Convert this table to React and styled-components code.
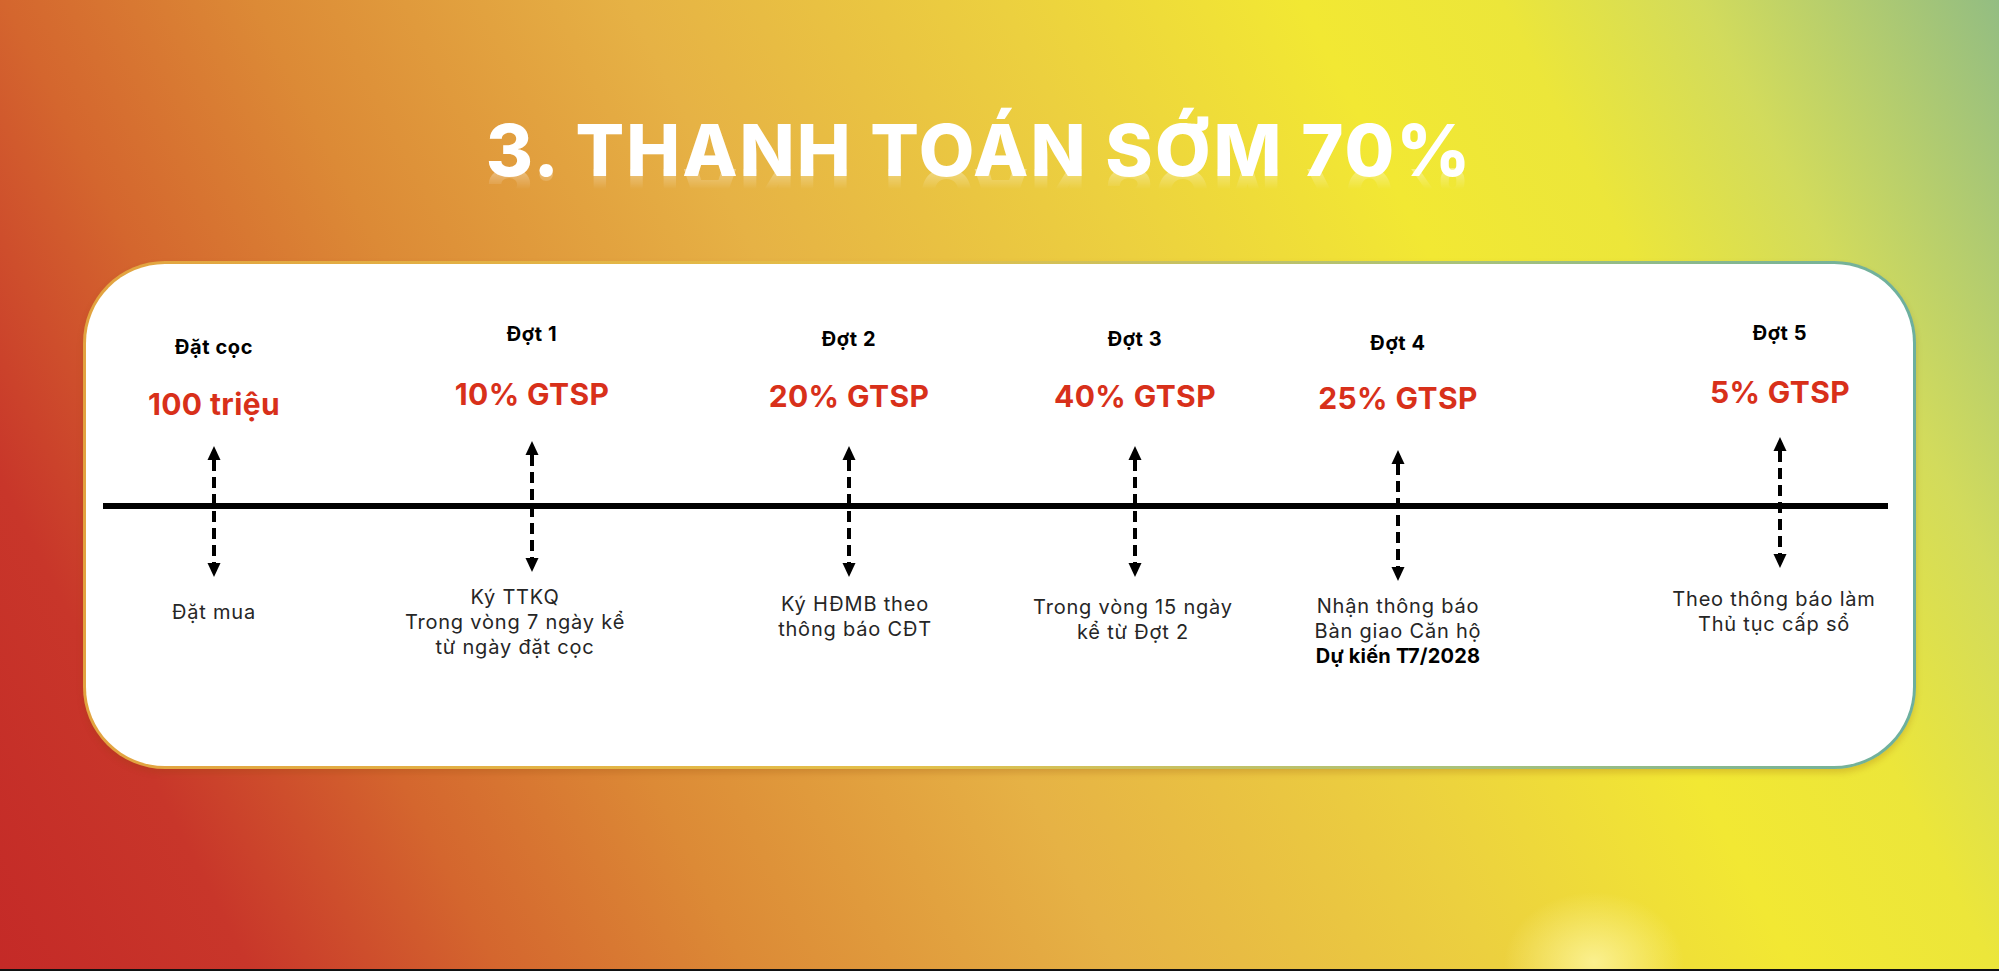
import React from "react";
import styled, { createGlobalStyle } from "styled-components";

const GlobalStyle = createGlobalStyle`
  html, body {
    margin: 0;
    padding: 0;
  }
  body {
    font-family: Inter, "Noto Sans", sans-serif;
  }
`;

const Page = styled.div`
  width: 1999px;
  height: 971px;
  box-sizing: border-box;
  border-bottom: 2px solid #111;
  overflow: hidden;
  display: flex;
  flex-direction: column;
  align-items: center;
  background:
    radial-gradient(ellipse 90px 70px at 1594px 962px, rgba(255, 248, 170, 0.75) 0, rgba(255, 248, 170, 0) 100%),
    linear-gradient(
      63deg,
      #c42a27 0%,
      #c8362a 10%,
      #d4662e 20%,
      #dc8a36 30%,
      #e6b245 45%,
      #ecd03f 60%,
      #f2e833 72%,
      #ece63a 80%,
      #d2db5c 88%,
      #93bd82 100%
    );
`;

const Title = styled.h1`
  margin: 114px 41px 0 0;
  font-family: Inter, "Open Sans", sans-serif;
  font-weight: 800;
  font-size: 72px;
  line-height: 1;
  color: #fff;
  letter-spacing: 2px;
  -webkit-box-reflect: below -27px
    linear-gradient(transparent 58%, rgba(255, 255, 255, 0.55));
`;

const Card = styled.section`
  margin-top: 75px;
  width: 1833px;
  height: 508px;
  box-sizing: border-box;
  border: 3px solid transparent;
  border-radius: 82px;
  background:
    linear-gradient(#fff, #fff) padding-box,
    linear-gradient(90deg, #e2a340 0%, #e3c04a 45%, #a9c27a 75%, #6caf9f 100%) border-box;
  box-shadow: 0 4px 6px rgba(140, 70, 10, 0.22);
`;

const Timeline = styled.div`
  display: flex;
  height: 100%;
  background: linear-gradient(#000, #000) 17px 239px / 1785px 6px no-repeat;
`;

const Stop = styled.div`
  width: 250px;
  flex: none;
  margin-left: ${(p) => p.$gap}px;
  display: flex;
  flex-direction: column;
  align-items: center;
  text-align: center;
`;

const Label = styled.div`
  margin-top: ${(p) => p.$mt}px;
  font-weight: 700;
  font-size: 20px;
  line-height: 24px;
  letter-spacing: 0.6px;
  color: #000;
`;

const Amount = styled.div`
  margin-top: ${(p) => p.$mt}px;
  font-weight: 700;
  font-size: 30px;
  line-height: 36px;
  color: #d8301a;
  letter-spacing: 0.4px;
`;

const ArrowBox = styled.div`
  margin-top: ${(p) => p.$mt}px;
  width: 16px;
  height: 131px;
  display: flex;
`;

const Desc = styled.div`
  margin: ${(p) => p.$mt}px ${(p) => -p.$dx}px 0 ${(p) => p.$dx}px;
  font-size: 20px;
  line-height: 25px;
  letter-spacing: 0.8px;
  color: #262626;
  white-space: nowrap;

  b {
    font-weight: 700;
    color: #000;
    letter-spacing: 0.2px;
  }
`;

function DashedArrow() {
  return (
    <svg width="16" height="131" viewBox="0 0 16 131">
      <polygon points="8,0 14.5,14 1.5,14" fill="#000" />
      <line
        x1="8"
        y1="14"
        x2="8"
        y2="117"
        stroke="#000"
        strokeWidth="4"
        strokeDasharray="11 6"
      />
      <polygon points="8,131 14.5,117 1.5,117" fill="#000" />
    </svg>
  );
}

const stops = [
  { label: "Đặt cọc", amount: "100 triệu", desc: ["Đặt mua"], gap: 3, dx: 0, d: [8, 8, 0, 8] },
  {
    label: "Đợt 1",
    amount: "10% GTSP",
    desc: ["Ký TTKQ", "Trong vòng 7 ngày kể", "từ ngày đặt cọc"],
    gap: 68,
    dx: -17,
    d: [-5, -2, -5, -7],
  },
  { label: "Đợt 2", amount: "20% GTSP", desc: ["Ký HĐMB theo", "thông báo CĐT"], gap: 67, dx: 6, d: [0, 0, 0, 0] },
  { label: "Đợt 3", amount: "40% GTSP", desc: ["Trong vòng 15 ngày", "kể từ Đợt 2"], gap: 36, dx: -2, d: [0, 0, 0, 3] },
  {
    label: "Đợt 4",
    amount: "25% GTSP",
    desc: ["Nhận thông báo", "Bàn giao Căn hộ"],
    bold: "Dự kiến T7/2028",
    gap: 13,
    dx: 0,
    d: [4, 2, 4, 2],
  },
  {
    label: "Đợt 5",
    amount: "5% GTSP",
    desc: ["Theo thông báo làm", "Thủ tục cấp sổ"],
    gap: 132,
    dx: -6,
    d: [-6, -4, -9, -5],
  },
];

export default function App() {
  return (
    <Page>
      <GlobalStyle />
      <Title>3. THANH TOÁN SỚM 70%</Title>
      <Card>
        <Timeline>
          {stops.map((s) => (
            <Stop key={s.label} $gap={s.gap}>
              <Label $mt={63 + s.d[0]}>{s.label}</Label>
              <Amount $mt={27 + s.d[1] - s.d[0]}>{s.amount}</Amount>
              <ArrowBox $mt={32 + s.d[2] - s.d[1]}>
                <DashedArrow />
              </ArrowBox>
              <Desc $mt={15 + s.d[3] - s.d[2]} $dx={s.dx}>
                {s.desc.map((line) => (
                  <div key={line}>{line}</div>
                ))}
                {s.bold && <b>{s.bold}</b>}
              </Desc>
            </Stop>
          ))}
        </Timeline>
      </Card>
    </Page>
  );
}
